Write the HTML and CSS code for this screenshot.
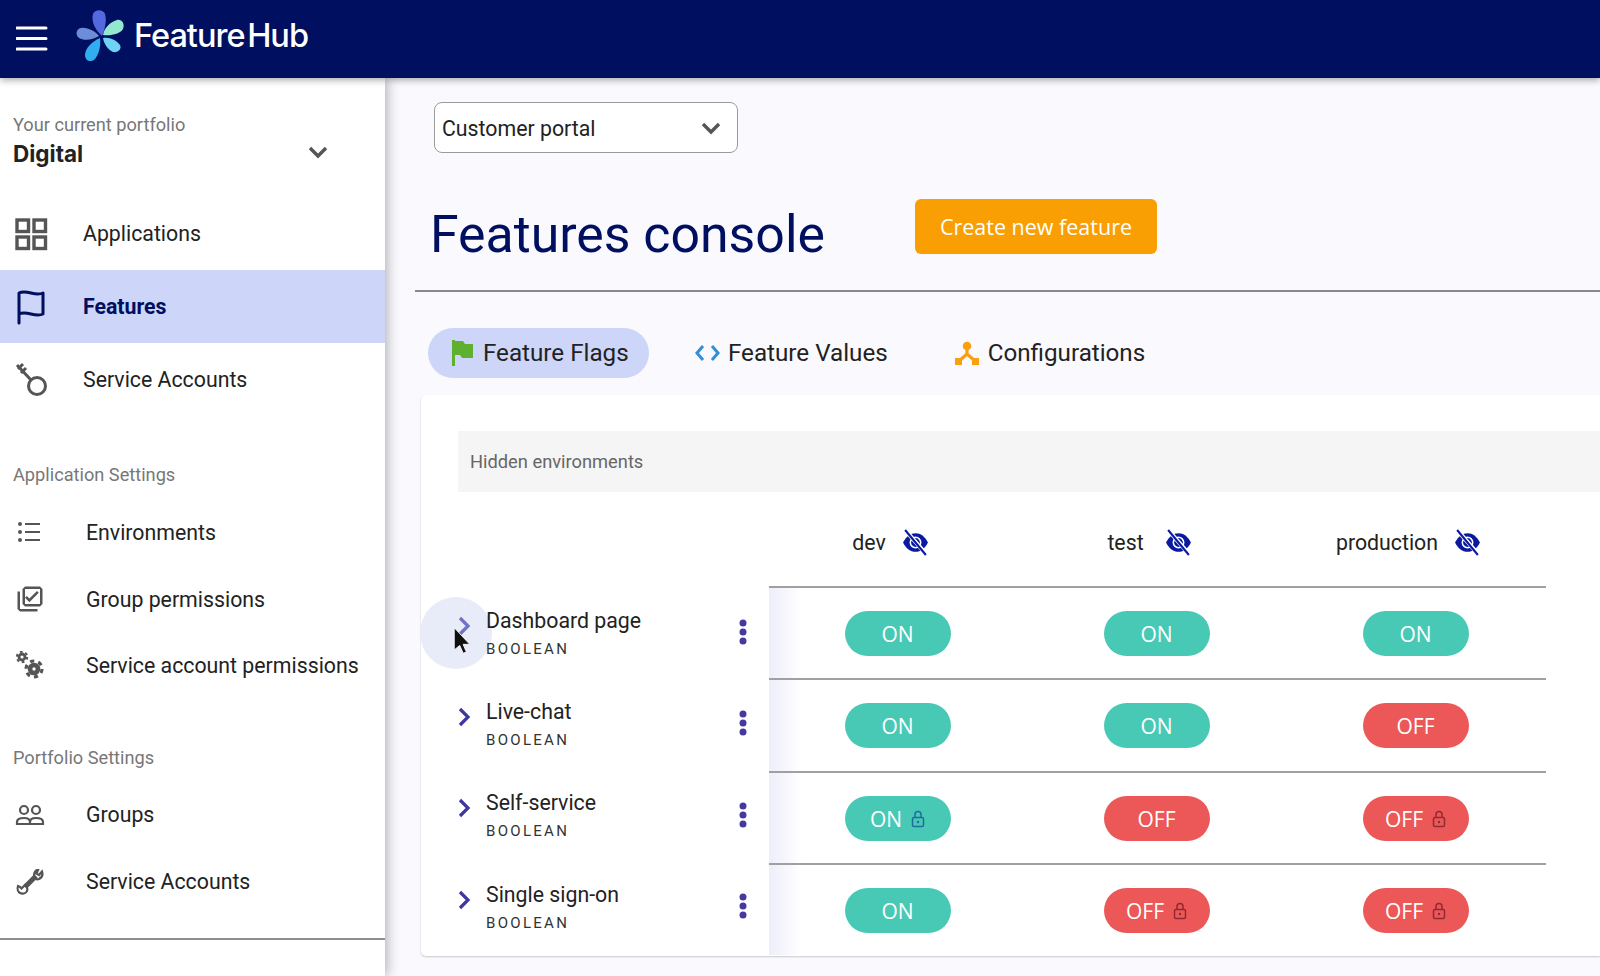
FILE: index.html
```html
<!DOCTYPE html>
<html lang="en">
<head>
<meta charset="utf-8">
<title>FeatureHub</title>
<link rel="stylesheet" href="styles.css">
</head>
<body>
<div class="app">
  <header class="topbar">
    <svg class="burger" width="32" height="26" viewBox="0 0 32 26"><path d="M1 3h29M1 13.500h29M1 24h29" stroke="#fff" stroke-width="3" stroke-linecap="round"/></svg>
    <svg class="logo" width="52" height="54" viewBox="0 0 52 54">
      <path d="M27 27C20 21 16 12 18 5c2-5 10-5 12 0 2 6 0 15-3 22z" fill="#5468e0"/>
      <path d="M28 26c1-7 7-13 14-15 5-1 8 4 6 9-3 5-12 7-20 6z" fill="#94e8cf"/>
      <path d="M28 29c7-1 13 2 17 7 2 4-2 8-7 7-5-2-9-8-10-14z" fill="#6fd3f5"/>
      <path d="M25 29c1 8-1 16-5 21-4 4-10 2-10-4 0-7 8-14 15-17z" fill="#30aef0"/>
      <path d="M24 27C18 31 9 32 4 29c-4-3-3-9 2-10 6-1 14 3 18 8z" fill="#6c8ed8"/>
    </svg>
    <span class="brand">Feature Hub</span>
  </header>
  <div class="layout">
    <aside class="sidebar">
      <div class="portfolio">
        <div class="portfolio-label">Your current portfolio</div>
        <div class="portfolio-row">
          <span class="portfolio-name">Digital</span>
          <svg width="20" height="14" viewBox="0 0 20 14"><path d="M2 3l8 8 8-8" fill="none" stroke="#555" stroke-width="3.400"/></svg>
        </div>
      </div>
      <nav class="nav-main">
        <a class="nav-item">
          <svg class="ico" width="34" height="34" viewBox="0 0 34 34"><g fill="none" stroke="#555" stroke-width="3.400"><rect x="3" y="3" width="11.500" height="11.500"/><rect x="20" y="3" width="11.500" height="11.500"/><rect x="3" y="20" width="11.500" height="11.500"/><rect x="20" y="20" width="11.500" height="11.500"/></g></svg>
          <span>Applications</span>
        </a>
        <a class="nav-item is-active">
          <svg class="ico" width="34" height="36" viewBox="0 0 34 36"><path d="M5 34V4c4-2 8-1 12 0s8 2 12 0v21c-4 2-8 1-12 0s-8-2-12 0" fill="none" stroke="#000f60" stroke-width="3" stroke-linecap="round" stroke-linejoin="round"/></svg>
          <span>Features</span>
        </a>
        <a class="nav-item">
          <svg class="ico" width="34" height="36" viewBox="0 0 34 36"><g fill="none" stroke="#555" stroke-width="3"><circle cx="23" cy="24" r="8.500"/><path d="M3 3l14 15M4 7l5-5M7 11l5-5"/></g></svg>
          <span>Service Accounts</span>
        </a>
      </nav>
      <div class="nav-heading nav-heading-app">Application Settings</div>
      <nav class="nav-sub nav-sub-app">
        <a class="nav-sub-item">
          <svg class="ico-sub" width="28" height="24" viewBox="0 0 28 24"><path d="M9 4h15M9 12h15M9 20h15" stroke="#555" stroke-width="2.200"/><g fill="#555"><circle cx="4" cy="4" r="2"/><circle cx="4" cy="12" r="2"/><circle cx="4" cy="20" r="2"/></g></svg>
          <span>Environments</span>
        </a>
        <a class="nav-sub-item">
          <svg class="ico-sub" width="30" height="30" viewBox="0 0 24 24"><path fill="#555" d="M20 4v12H8V4h12m0-2H8L6 4v12l2 2h12l2-2V4l-2-2zm-8.500 9.670l-2.040-2.100L8 11l3.500 3.500L19 7l-1.410-1.410zM4 6H2v14l2 2h14v-2H4z"/></svg>
          <span>Group permissions</span>
        </a>
        <a class="nav-sub-item">
          <svg class="ico-sub" width="30" height="30" viewBox="0 0 30 30"><g fill="none" stroke="#555"><circle cx="7" cy="6" r="3" stroke-width="2.800"/><circle cx="7" cy="6" r="5.200" stroke-width="2" stroke-dasharray="2.700 2.750"/><circle cx="19" cy="18" r="4" stroke-width="4.600"/><circle cx="19" cy="18" r="8" stroke-width="3.200" stroke-dasharray="4.200 4.180"/></g></svg>
          <span>Service account permissions</span>
        </a>
      </nav>
      <div class="nav-heading nav-heading-port">Portfolio Settings</div>
      <nav class="nav-sub nav-sub-port">
        <a class="nav-sub-item">
          <svg class="ico-sub" width="30" height="24" viewBox="0 0 30 24"><g fill="none" stroke="#555" stroke-width="2.200"><circle cx="9" cy="7" r="4"/><circle cx="21" cy="7" r="4"/><path d="M2 21v-2c0-3 4-4 7-4s6 1 6 4v2zM15 19c0-3 3-4 6-4s7 1 7 4v2H15"/></g></svg>
          <span>Groups</span>
        </a>
        <a class="nav-sub-item">
          <svg class="ico-sub" width="30" height="30" viewBox="0 0 30 30"><g fill="none" stroke="#555"><path d="M10 20L21 9" stroke-width="5"/><path d="M27 4.500c1 3 0 6-3 7.500-3 1-5-1-5-3s1-5 3-6c1 0 1 0 1 0l-1.500 3.500 2.500 1.500z" stroke-width="2.200"/><path d="M3 19c-1 3 0 6 2 7s6 1 7-2c1-2 0-4-2-6l-3.500 3.500L5 20z" stroke-width="2.200"/></g></svg>
          <span>Service Accounts</span>
        </a>
      </nav>
      <hr class="side-rule">
    </aside>
    <main class="main">
      <div class="select">
        <span>Customer portal</span>
        <svg width="20" height="14" viewBox="0 0 20 14"><path d="M2 3l8 8 8-8" fill="none" stroke="#555" stroke-width="3.400"/></svg>
      </div>
      <div class="title-row">
        <h1 class="title">Features console</h1>
        <button class="create">Create new feature</button>
      </div>
      <div class="tabs">
        <div class="tab is-active">
          <svg width="26" height="28" viewBox="0 0 26 28"><path d="M3 1h3v26H3z" fill="#5fb030"/><path d="M5 2h9l2 3h8v14H13l-2-3H5z" fill="#5fb030"/></svg>
          <span>Feature Flags</span>
        </div>
        <div class="tab tab-values">
          <svg width="27" height="20" viewBox="0 0 27 20"><path d="M9 3L3 10l6 7M18 3l6 7-6 7" fill="none" stroke="#2f8fd8" stroke-width="3"/></svg>
          <span>Feature Values</span>
        </div>
        <div class="tab tab-config">
          <svg width="26" height="26" viewBox="0 0 26 26"><circle cx="13" cy="6" r="4.300" fill="#f99f10"/><path d="M13 8v6L5 21M13 14l8 7" fill="none" stroke="#f99f10" stroke-width="3.200"/><path d="M1 18h7v7H1zM18 18h7v7h-7z" fill="#f99f10"/></svg>
          <span>Configurations</span>
        </div>
      </div>
      <section class="card">
        <div class="hidden-env">Hidden environments</div>
        <div class="env-head">
          <div class="env-spacer"></div>
          <div class="env"><span>dev</span><svg width="27" height="27" viewBox="0 0 26 26"><path d="M1 13C4 7 8 4 13 4s9 3 12 9c-3 6-7 9-12 9S4 19 1 13z" fill="#0a1aa0"/><circle cx="13" cy="13" r="5" fill="none" stroke="#fff" stroke-width="1.500"/><path d="M4 2l19 22" stroke="#fff" stroke-width="4"/><path d="M3 1l20 24" stroke="#0a1aa0" stroke-width="2"/></svg></div>
          <div class="env env-test"><span>test</span><svg width="27" height="27" viewBox="0 0 26 26"><path d="M1 13C4 7 8 4 13 4s9 3 12 9c-3 6-7 9-12 9S4 19 1 13z" fill="#0a1aa0"/><circle cx="13" cy="13" r="5" fill="none" stroke="#fff" stroke-width="1.500"/><path d="M4 2l19 22" stroke="#fff" stroke-width="4"/><path d="M3 1l20 24" stroke="#0a1aa0" stroke-width="2"/></svg></div>
          <div class="env"><span>production</span><svg width="27" height="27" viewBox="0 0 26 26"><path d="M1 13C4 7 8 4 13 4s9 3 12 9c-3 6-7 9-12 9S4 19 1 13z" fill="#0a1aa0"/><circle cx="13" cy="13" r="5" fill="none" stroke="#fff" stroke-width="1.500"/><path d="M4 2l19 22" stroke="#fff" stroke-width="4"/><path d="M3 1l20 24" stroke="#0a1aa0" stroke-width="2"/></svg></div>
        </div>

        <div class="table">
          <div class="features">
            <div class="feature">
              <span class="hover-ring"></span>
              <svg class="chev chev-hover" width="14" height="20" viewBox="0 0 14 20"><path d="M2 2l8 8-8 8" fill="none" stroke="currentColor" stroke-width="3.200"/></svg>
              <div class="feature-text"><div class="feature-name">Dashboard page</div><div class="feature-type">BOOLEAN</div></div>
              <svg class="dots" width="8" height="26" viewBox="0 0 8 26"><circle cx="4" cy="4" r="3.500"/><circle cx="4" cy="13" r="3.500"/><circle cx="4" cy="22" r="3.500"/></svg>
              <svg class="cursor" width="20" height="30" viewBox="0 0 18 26"><path d="M2 1v20l5-4 3 7 3-1-3-7h6z" fill="#111" stroke="#fff" stroke-width="0.800"/></svg>
            </div>
            <div class="feature">
              <svg class="chev" width="14" height="20" viewBox="0 0 14 20"><path d="M2 2l8 8-8 8" fill="none" stroke="currentColor" stroke-width="3.200"/></svg>
              <div class="feature-text"><div class="feature-name">Live-chat</div><div class="feature-type">BOOLEAN</div></div>
              <svg class="dots" width="8" height="26" viewBox="0 0 8 26"><circle cx="4" cy="4" r="3.500"/><circle cx="4" cy="13" r="3.500"/><circle cx="4" cy="22" r="3.500"/></svg>
            </div>
            <div class="feature">
              <svg class="chev" width="14" height="20" viewBox="0 0 14 20"><path d="M2 2l8 8-8 8" fill="none" stroke="currentColor" stroke-width="3.200"/></svg>
              <div class="feature-text"><div class="feature-name">Self-service</div><div class="feature-type">BOOLEAN</div></div>
              <svg class="dots" width="8" height="26" viewBox="0 0 8 26"><circle cx="4" cy="4" r="3.500"/><circle cx="4" cy="13" r="3.500"/><circle cx="4" cy="22" r="3.500"/></svg>
            </div>
            <div class="feature">
              <svg class="chev" width="14" height="20" viewBox="0 0 14 20"><path d="M2 2l8 8-8 8" fill="none" stroke="currentColor" stroke-width="3.200"/></svg>
              <div class="feature-text"><div class="feature-name">Single sign-on</div><div class="feature-type">BOOLEAN</div></div>
              <svg class="dots" width="8" height="26" viewBox="0 0 8 26"><circle cx="4" cy="4" r="3.500"/><circle cx="4" cy="13" r="3.500"/><circle cx="4" cy="22" r="3.500"/></svg>
            </div>
          </div>
          <div class="values">
            <div class="row">
              <div class="cell"><span class="pill on">ON</span></div>
              <div class="cell"><span class="pill on">ON</span></div>
              <div class="cell"><span class="pill on">ON</span></div>
            </div>
            <div class="row">
              <div class="cell"><span class="pill on">ON</span></div>
              <div class="cell"><span class="pill on">ON</span></div>
              <div class="cell"><span class="pill off">OFF</span></div>
            </div>
            <div class="row">
              <div class="cell"><span class="pill on">ON<svg class="lock" width="14" height="18" viewBox="0 0 14 18"><path d="M4 8V4.500a3 3 0 016 0V8" fill="none" stroke="currentColor" stroke-width="1.500"/><rect x="1.500" y="7.500" width="11" height="9" rx="1.500" fill="none" stroke="currentColor" stroke-width="1.500"/><circle cx="7" cy="12" r="1.200" fill="currentColor"/></svg></span></div>
              <div class="cell"><span class="pill off">OFF</span></div>
              <div class="cell"><span class="pill off">OFF<svg class="lock" width="14" height="18" viewBox="0 0 14 18"><path d="M4 8V4.500a3 3 0 016 0V8" fill="none" stroke="currentColor" stroke-width="1.500"/><rect x="1.500" y="7.500" width="11" height="9" rx="1.500" fill="none" stroke="currentColor" stroke-width="1.500"/><circle cx="7" cy="12" r="1.200" fill="currentColor"/></svg></span></div>
            </div>
            <div class="row">
              <div class="cell"><span class="pill on">ON</span></div>
              <div class="cell"><span class="pill off">OFF<svg class="lock" width="14" height="18" viewBox="0 0 14 18"><path d="M4 8V4.500a3 3 0 016 0V8" fill="none" stroke="currentColor" stroke-width="1.500"/><rect x="1.500" y="7.500" width="11" height="9" rx="1.500" fill="none" stroke="currentColor" stroke-width="1.500"/><circle cx="7" cy="12" r="1.200" fill="currentColor"/></svg></span></div>
              <div class="cell"><span class="pill off">OFF<svg class="lock" width="14" height="18" viewBox="0 0 14 18"><path d="M4 8V4.500a3 3 0 016 0V8" fill="none" stroke="currentColor" stroke-width="1.500"/><rect x="1.500" y="7.500" width="11" height="9" rx="1.500" fill="none" stroke="currentColor" stroke-width="1.500"/><circle cx="7" cy="12" r="1.200" fill="currentColor"/></svg></span></div>
            </div>
          </div>
        </div>
      </section>
    </main>
  </div>
</div>
</body>
</html>
```
FILE: styles.css
```css
* { box-sizing: border-box; }
html, body { margin: 0; height: 100%; overflow: hidden; }
body { font-family: Roboto, "Liberation Sans", sans-serif; color: #222; background: #f9f9fe; }

.app { width: 1600px; height: 976px; display: flex; flex-direction: column; overflow: hidden; }

.topbar {
  height: 78px; flex: none; background: #000f60; display: flex; align-items: center;
  padding: 0 0 2px 16px; position: relative; z-index: 3;
  box-shadow: 0 2px 7px rgba(0,0,0,.35);
}
.burger { margin-right: 27px; }
.logo { margin: -4px 7px 0 0; }
.brand { font-family: Inter, sans-serif; font-weight: 500; font-size: 32.500px; letter-spacing: -1px; word-spacing: -5px; color: #fff; margin-top: -5px; }

.layout { flex: 1; display: flex; min-height: 0; }

.sidebar {
  width: 385px; flex: none; background: #fff; position: relative; z-index: 2;
  box-shadow: 2px 0 12px rgba(0,0,0,.3); padding-top: 37px;
}
.portfolio { padding: 0 59px 0 13px; }
.portfolio-label { font-size: 18.200px; line-height: 20px; color: #777; }
.portfolio-row { display: flex; justify-content: space-between; align-items: center; height: 36px; margin-top: -1px; }
.portfolio-row svg { margin-right: -2px; }
.portfolio-name { font-family: Inter, sans-serif; font-weight: 700; font-size: 22.500px; color: #222; padding-top: 2px; }

.nav-main { margin-top: 27px; }
.nav-item { display: flex; align-items: center; height: 73px; padding-left: 14px; font-size: 21.300px; color: #222; }
.nav-item .ico { margin-right: 35px; flex: none; }
.nav-item.is-active { background: #cdd5f9; color: #000f60; font-weight: 700; }

.nav-heading { padding-left: 13px; font-size: 18.200px; line-height: 22px; color: #777; }
.nav-heading-app { margin-top: 48px; }
.nav-heading-port { margin-top: 48px; }

.nav-sub-app { margin-top: 13px; }
.nav-sub-port { margin-top: 12px; }
.nav-sub-item { display: flex; align-items: center; height: 66.800px; padding-left: 15px; font-size: 21.300px; color: #222; }
.ico-sub { width: 30px; margin-right: 41px; flex: none; }

.side-rule { border: 0; border-top: 2px solid #8e8e8e; margin: 23px 0 0; }

.main { flex: 1; min-width: 0; padding: 24px 0 0 30px; background: #f9f9fe; }

.select {
  width: 304px; height: 51px; margin-left: 19px; padding: 1px 16px 0 7px;
  display: flex; align-items: center; justify-content: space-between;
  border: 1.500px solid #9a9a9a; border-radius: 8px; background: #fff; font-size: 21.300px; color: #222;
}

.title-row {
  display: flex; align-items: flex-start; height: 93px; margin-top: 46px; padding-left: 15px;
  border-bottom: 2px solid #8a8a8a;
}
.title { margin: 4px 0 0; font-weight: 400; font-size: 51.800px; line-height: 64px; color: #000f60; }
.create {
  margin-left: 90px; width: 242px; height: 55px; border: 0; border-radius: 6px; background: #f99f04;
  color: #fff; font-family: "Open Sans", sans-serif; font-size: 21.500px; padding: 0;
}

.tabs { display: flex; margin: 36px 0 0 13px; height: 50px; }
.tab { display: flex; align-items: center; font-size: 24.200px; color: #222; height: 50px; }
.tab.is-active { width: 221px; padding-left: 21px; background: #cdd5f9; border-radius: 25px; }
.tab.is-active svg { margin-right: 8px; }
.tab-values { margin-left: 45px; }
.tab-values svg { margin-right: 7px; }
.tab-config { margin-left: 66px; }
.tab-config svg { margin-right: 8px; }

.card {
  margin: 17px 0 0 6px; height: 561px; background: #fff; border-radius: 5px 0 0 5px;
  box-shadow: 0 1px 2px rgba(0,0,0,.2);
}
.hidden-env {
  margin-left: 37px; position: relative; top: 36px; height: 61px; padding-left: 12px;
  display: flex; align-items: center; background: #f5f5f5; font-size: 18.300px; color: #666;
}

.env-head { display: flex; margin-top: 36px; height: 94px; }
.env-spacer { width: 348px; flex: none; }
.env { width: 259px; flex: none; display: flex; align-items: center; justify-content: center; gap: 16px; padding: 6px 16px 0 0; font-size: 21.300px; color: #222; }
.env-test { gap: 21px; }

.table { display: flex; }
.features { width: 348px; flex: none; }
.values { flex: none; }

.row { display: flex; height: 92.250px; }
.row .cell:first-child { background: linear-gradient(to right, #edeefa, #fff 32px); }

.feature { height: 91.300px; display: flex; align-items: center; padding: 0 0 0 37px; position: relative; }
.hover-ring { position: absolute; left: -1px; top: 11px; width: 72px; height: 72px; border-radius: 50%; background: #e8ebf8; }
.chev { position: relative; color: #3f36a0; margin: -12px 14px 0 0; flex: none; }
.chev-hover { color: #7070c8; }
.feature-text { position: relative; flex: 1; padding-top: 2px; }
.feature-name { font-size: 21.300px; line-height: 26px; color: #222; }
.feature-type { font-size: 15px; line-height: 18px; letter-spacing: 2.300px; margin-top: 6px; color: #333; }
.dots { fill: #4539a0; margin: 1px 22px 0 0; flex: none; }
.cursor { position: absolute; left: 31px; top: 40px; }

.cell { width: 259px; flex: none; display: flex; align-items: center; justify-content: center; border-top: 2px solid #a0a0a0; }

.pill {
  width: 106px; height: 45px; margin: 1px 2px 0 0; padding-top: 1px; border-radius: 24px; color: #fff;
  display: flex; align-items: center; justify-content: center; gap: 9px;
  font-family: "Open Sans", sans-serif; font-size: 21px;
}
.on { background: #48c9b6; }
.on .lock { color: #1f6e9a; }
.off { background: #ec5757; }
.off .lock { color: #8e2b35; }
```
